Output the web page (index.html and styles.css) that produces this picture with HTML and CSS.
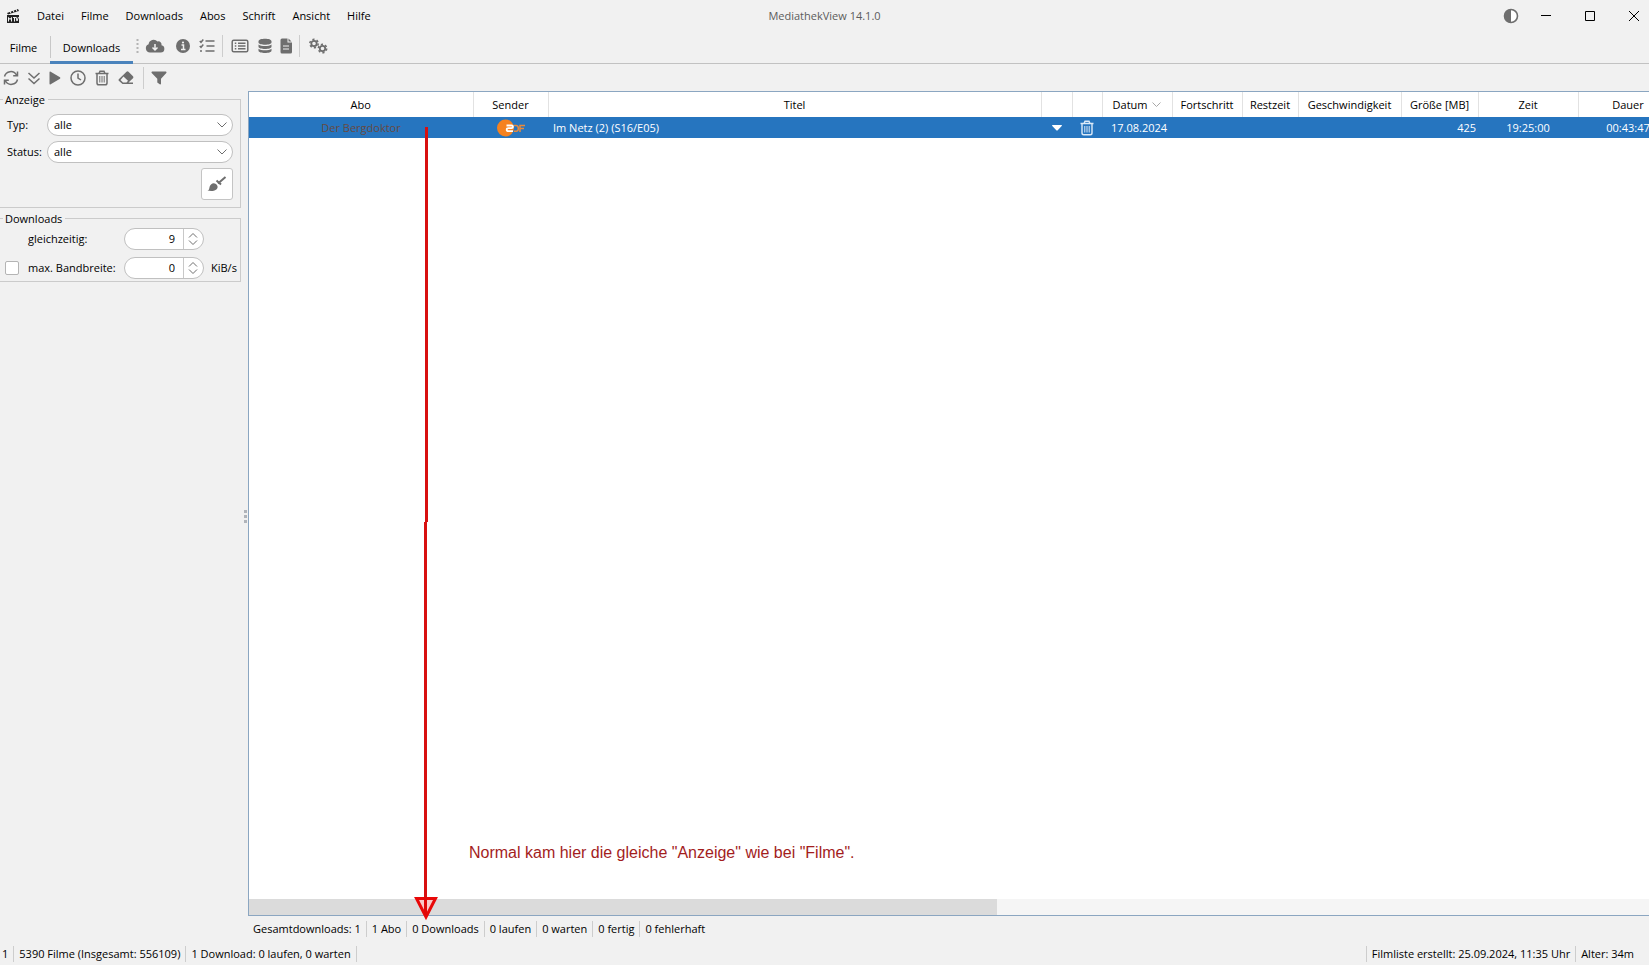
FILE: index.html
```html
<!DOCTYPE html>
<html lang="de">
<head>
<meta charset="utf-8">
<title>MediathekView 14.1.0</title>
<link rel="stylesheet" href="styles.css">
</head>
<body>
<div class="app">
  <header class="titlebar">
    <nav class="menu">
      <svg class="logo" width="14" height="16" viewBox="0 0 14 16" aria-hidden="true"><path d="M1 5 12 1l1 2L2 6.500z" fill="#222"/><path d="M1 7h12v8H1z" fill="#222"/><path d="m4 3 1 2.500M7 2l1 2.500M10 1l1 2.500" stroke="#f1f1f1" stroke-width="1"/><path d="M2.500 13.500v-4l1.500 2 1.500-2v4M7 9.500h3M8.500 9.500v4M10 9l1 4 1.500-4" fill="none" stroke="#f1f1f1"/></svg>
      <button>Datei</button><button>Filme</button><button>Downloads</button><button>Abos</button><button>Schrift</button><button>Ansicht</button><button>Hilfe</button>
    </nav>
    <h1 class="title">MediathekView 14.1.0</h1>
    <div class="window-controls">
      <button aria-label="Design wechseln"><svg width="16" height="16" viewBox="0 0 16 16"><circle cx="8" cy="8" r="6.500" fill="#fff" stroke="#6e6e6e" stroke-width="1.600"/><path d="M8 1.500a6.500 6.500 0 0 0 0 13z" fill="#6e6e6e"/></svg></button>
      <button aria-label="Minimieren"><svg width="10" height="10" viewBox="0 0 10 10"><path d="M0 4.500h10" stroke="#000"/></svg></button>
      <button aria-label="Maximieren"><svg width="10" height="10" viewBox="0 0 10 10"><path d="M.5.5h9v9h-9z" fill="none" stroke="#000"/></svg></button>
      <button aria-label="Schließen"><svg width="10" height="10" viewBox="0 0 10 10"><path d="m0 0 10 10M10 0 0 10" stroke="#000"/></svg></button>
    </div>
  </header>

  <div class="tabbar">
    <button class="tab">Filme</button>
    <button class="tab tab-active">Downloads</button>
    <div class="tools">
      <svg class="grip" width="3" height="14" viewBox="0 0 3 14" aria-hidden="true"><path d="M.5 0h2v2h-2zM.5 4h2v2h-2zM.5 8h2v2h-2zM.5 12h2v2h-2z" fill="#b4b4b4"/></svg>
      <button class="tool w-cloud" aria-label="Filmliste laden"><svg width="20" height="16" viewBox="0 0 20 16"><path d="M5 14.500A4.300 4.300 0 0 1 3.600 6.200 5 5 0 0 1 12.500 3.600a3 3 0 0 1 4 3.600A3.700 3.700 0 0 1 15.800 14.500z"/><path d="M10 6v6M7.500 9.500 10 12l2.500-2.500" class="cut"/></svg></button>
      <button class="tool" aria-label="Information"><svg width="16" height="16" viewBox="0 0 16 16"><circle cx="8" cy="8" r="7"/><path d="M6.500 7h2v4.500M6 11.500h4.500" class="cut"/><circle cx="8" cy="4.500" r="1.100" fill="#f1f1f1"/></svg></button>
      <button class="tool" aria-label="Aufgaben"><svg width="16" height="16" viewBox="0 0 16 16" class="line"><path d="M6.500 3h9M7.500 8h8M6.500 13h9M.8 3l1.200 1.300 2.300-2.800M.8 8l1.200 1.300 2.300-2.800"/><circle cx="2" cy="13" r="1" fill="#6e6e6e" stroke="none"/></svg></button>
      <span class="sep"></span>
      <button class="tool w-wide" aria-label="Liste"><svg width="18" height="16" viewBox="0 0 18 16" class="line"><rect x="1.200" y="2.200" width="15.600" height="11.600" rx="1.500"/><path d="M7 5.200h7.500M7 8h7.500M7 10.800h7.500M3.800 5.200h1.500M3.800 8h1.500M3.800 10.800h1.500"/></svg></button>
      <button class="tool w-db" aria-label="Datenbank"><svg width="14" height="16" viewBox="0 0 14 16"><path d="M.5 3.200C.5-.1 13.500-.1 13.500 3.200v1.300c0 3-13 3-13 0zM.5 6.600c2.800 2 10.200 2 13 0v2.200c0 3-13 3-13 0zM.5 10.800c2.800 2 10.200 2 13 0v2c0 3-13 3-13 0z"/></svg></button>
      <button class="tool w-narrow" aria-label="Protokoll"><svg width="12" height="16" viewBox="0 0 12 16"><path d="M2 .5h5.500v4H12V14a1.500 1.500 0 0 1-1.500 1.500H2A1.500 1.500 0 0 1 .5 14V2A1.500 1.500 0 0 1 2 .5z"/><path d="m8.500.5 3 3h-3z"/><path d="M3 8h6M3 11h6" class="cut thin"/></svg></button>
      <span class="sep"></span>
      <button class="tool w-gears" aria-label="Einstellungen"><svg width="20" height="16" viewBox="0 0 20 16" class="line"><circle cx="6" cy="5.500" r="2.700" stroke-width="1.800"/><circle cx="6" cy="5.500" r="4.200" stroke-width="1.500" stroke-dasharray="2.200 2.200"/><circle cx="14.500" cy="10.500" r="2.700" stroke-width="1.800"/><circle cx="14.500" cy="10.500" r="4.200" stroke-width="1.500" stroke-dasharray="2.200 2.200"/></svg></button>
    </div>
  </div>

  <div class="toolbar">
    <button class="tool w-refresh" aria-label="Aktualisieren"><svg width="16" height="16" viewBox="0 0 16 16" class="line"><path d="M1.500 6.500A6.500 6.500 0 0 1 13.500 5M14.500 1.500v4.300h-4.300M14.500 9.500A6.500 6.500 0 0 1 2.500 11M1.500 14.500v-4.300h4.300"/></svg></button>
    <button class="tool" aria-label="Alle starten"><svg width="14" height="16" viewBox="0 0 14 16" class="line"><path d="m1.500 3 5.500 5 5.500-5M1.500 8.500l5.500 5 5.500-5"/></svg></button>
    <button class="tool w-play" aria-label="Starten"><svg width="12" height="16" viewBox="0 0 12 16"><path d="M.5 2.500q0-1.300 1.200-.7l9.300 5.500q.8.700 0 1.400l-9.300 5.500q-1.200.6-1.200-.7z"/></svg></button>
    <button class="tool w-wide" aria-label="Zeitplan"><svg width="16" height="16" viewBox="0 0 16 16" class="line"><circle cx="8" cy="8" r="7"/><path d="M8 3.500V8l3 2"/></svg></button>
    <button class="tool w-narrow" aria-label="Löschen"><svg width="14" height="16" viewBox="0 0 14 16" class="line"><path d="M.5 3.500h13M4 3.500 5 1.200h4l1 2.300M2 3.500V13q0 1.800 1.800 1.800h6.400Q12 14.800 12 13V3.500"/><path d="M4.800 6v6.500M7 6v6.500M9.200 6v6.500" stroke-width="1"/></svg></button>
    <button class="tool w-wide" aria-label="Aufräumen"><svg width="16" height="16" viewBox="0 0 16 16"><path d="M.8 9.200 8.500 1.800q1-.9 2 0L15 6.300q.9 1 0 2L10.500 12.500H15V14H4.500L.8 10.800q-.7-.8 0-1.600z"/><path d="m5.500 6.500 4.500 4.300-1.500 1.600H5L2.500 10z" fill="#f1f1f1"/></svg></button>
    <span class="sep"></span>
    <button class="tool" aria-label="Filter"><svg width="16" height="16" viewBox="0 0 16 16"><path d="M1 1.500h14q1 .5.300 1.500L10 8.800v5q-.4 1-1.300.4L6.300 12.500V8.800L.7 3Q0 2 1 1.500z"/></svg></button>
  </div>

  <main class="main">
    <aside class="side">
      <fieldset class="group">
        <legend>Anzeige</legend>
        <div class="filters">
          <label for="typ">Typ:</label>
          <span class="combo"><select id="typ"><option>alle</option></select><svg width="10" height="6" viewBox="0 0 10 6"><path d="m.5.5 4.500 4.500L9.500.5"/></svg></span>
          <label for="status">Status:</label>
          <span class="combo"><select id="status"><option>alle</option></select><svg width="10" height="6" viewBox="0 0 10 6"><path d="m.5.5 4.500 4.500L9.500.5"/></svg></span>
          <button class="reset" aria-label="Filter zurücksetzen"><svg width="20" height="18" viewBox="0 0 20 18"><path d="M.5 15.500c2-.3 1.500-2 2.200-4C3.700 8.500 6.500 7.200 9 9c3 2.500 1.500 5.500-1.500 6.500-2.500.8-5 .5-7 0z"/><path d="m9.500 5.500 4.500 4" stroke="#6e6e6e" stroke-width="2"/><path d="M11 8.500 18.500 2" stroke="#6e6e6e" stroke-width="2"/></svg></button>
        </div>
      </fieldset>
      <fieldset class="group group-downloads">
        <legend>Downloads</legend>
        <div class="limits">
          <label class="limit-label" for="parallel">gleichzeitig:</label>
          <span class="spinner"><input id="parallel" type="number" value="9"><span class="steps"><button aria-label="Mehr"><svg width="10" height="6" viewBox="0 0 10 6"><path d="m1 5.500 4-4 4 4"/></svg></button><button aria-label="Weniger"><svg width="10" height="6" viewBox="0 0 10 6"><path d="m1 .5 4 4 4-4"/></svg></button></span></span>
          <input class="check" id="bandwidth-on" type="checkbox">
          <label class="limit-label" for="bandwidth-on">max. Bandbreite:</label>
          <span class="spinner"><input type="number" value="0" aria-label="max. Bandbreite in KiB/s"><span class="steps"><button aria-label="Mehr"><svg width="10" height="6" viewBox="0 0 10 6"><path d="m1 5.500 4-4 4 4"/></svg></button><button aria-label="Weniger"><svg width="10" height="6" viewBox="0 0 10 6"><path d="m1 .5 4 4 4-4"/></svg></button></span></span>
          <span class="unit">KiB/s</span>
        </div>
      </fieldset>
    </aside>
    <div class="splitter"><svg width="3" height="13" viewBox="0 0 3 13" aria-hidden="true"><path d="M0 0h3v3H0zM0 5h3v3H0zM0 10h3v3H0z" fill="#b0b4ba"/></svg></div>
    <section class="content">
      <div class="list">
        <div class="table-view">
          <table class="downloads">
            <colgroup><col class="c-abo"><col class="c-sender"><col class="c-titel"><col class="c-start"><col class="c-del"><col class="c-datum"><col class="c-fort"><col class="c-rest"><col class="c-speed"><col class="c-size"><col class="c-zeit"><col class="c-dauer"></colgroup>
            <thead><tr><th>Abo</th><th>Sender</th><th>Titel</th><th></th><th></th><th>Datum <svg class="sort" width="9" height="6" viewBox="0 0 9 6"><path d="m.5.5 4 4 4-4"/></svg></th><th>Fortschritt</th><th>Restzeit</th><th>Geschwindigkeit</th><th>Größe [MB]</th><th>Zeit</th><th>Dauer</th></tr></thead>
            <tbody><tr>
              <td class="abo">Der Bergdoktor</td>
              <td class="mid"><svg width="28" height="18" viewBox="0 0 28 18" role="img" aria-label="ZDF"><circle cx="8.500" cy="9" r="8.500" fill="#f58220"/><path d="M9.500 6.500h5q1.500 0 1.500 1.300T14.500 9.200h-3q-1.800 0-1.800 1.500t1.800 1.500H16" fill="none" stroke="#fff" stroke-width="1.800"/><path d="M17 6.500h2q2.300 0 2.300 2.900T19 12.200h-2M23 13V6.500h5M23 9.500h4" fill="none" stroke="#e88a3c" stroke-width="1.500"/></svg></td>
              <td>Im Netz (2) (S16/E05)</td>
              <td class="mid"><svg width="10" height="6" viewBox="0 0 10 6"><path d="M.5 0h9q.8.500.2 1L5.500 5.500h-1L.3 1Q-.3.500.5 0z" fill="#fff"/></svg></td>
              <td class="mid"><svg width="14" height="16" viewBox="0 0 14 16" fill="none" stroke="#dceaf8" stroke-width="1.400"><path d="M.5 3.500h13M4 3.500 5 1.200h4l1 2.300M2 3.500V13q0 1.800 1.800 1.800h6.400Q12 14.800 12 13V3.500"/><path d="M4.800 6v6.500M7 6v6.500M9.200 6v6.500" stroke-width="1"/></svg></td>
              <td class="date">17.08.2024</td><td></td><td></td><td></td>
              <td class="num">425</td><td class="mid">19:25:00</td><td class="mid">00:43:47</td>
            </tr></tbody>
          </table>
        </div>
        <div class="scroll"><div class="thumb"></div></div>
      </div>
      <div class="summary"><span>Gesamtdownloads: 1</span><span>1 Abo</span><span>0 Downloads</span><span>0 laufen</span><span>0 warten</span><span>0 fertig</span><span>0 fehlerhaft</span></div>
    </section>
  </main>

  <footer class="statusbar">
    <div class="status-left"><span>1</span><span>5390 Filme (Insgesamt: 556109)</span><span>1 Download: 0 laufen, 0 warten</span></div>
    <div class="status-right"><span>Filmliste erstellt: 25.09.2024, 11:35 Uhr</span><span>Alter: 34m</span></div>
  </footer>

  <svg class="arrow" width="24" height="794" viewBox="0 0 24 794" aria-hidden="true"><path d="M12.500 0v395M11.500 395v390" stroke="#d81010" stroke-width="3"/><path d="M2.500 771.500h19L12 790z" fill="#f8c8c8" stroke="#e80808" stroke-width="3"/><path d="M11.500 770v18" stroke="#e00808" stroke-width="3"/></svg>
  <p class="note">Normal kam hier die gleiche "Anzeige" wie bei "Filme".</p>
</div>
</body>
</html>
```
FILE: styles.css
```css
* { box-sizing: border-box; }
body { margin: 0; background: #f1f1f1; color: #000; font: 11px/16px "Open Sans", "Noto Sans", sans-serif; }
button, input, select { font: inherit; color: inherit; }
button { padding: 0; border: 0; background: none; }
svg { display: block; flex: none; }

.app { position: relative; display: flex; flex-direction: column; height: 100vh; overflow: hidden; }

.titlebar { display: grid; grid-template-columns: 1fr auto 1fr; align-items: center; height: 31px; }
.menu { display: flex; align-items: center; padding-left: 6px; gap: 17px; }
.title { margin: 0; font-size: 11px; font-weight: 400; color: #5c5c5c; }
.window-controls { display: flex; justify-content: flex-end; align-items: center; }
.window-controls button { display: grid; place-items: center; width: 44px; height: 30px; }
.window-controls button:first-child { width: 26px; }
.window-controls button:last-child { width: 37px; padding-left: 7px; }

.tabbar { display: flex; height: 33px; border-bottom: 1px solid #c2c2c2; }
.tab { width: 50px; height: 33px; padding: 3px 3px 2px 0; }
.tab-active { position: relative; width: 83px; padding: 3px 0 0; border-bottom: 3px solid #4a83bc; }
.tab-active::before { content: ""; position: absolute; left: 0; top: 5px; height: 22px; border-left: 1px solid #c8c8c8; }
.tools, .toolbar { display: flex; align-items: center; }
.tools { padding: 0 0 2px 3px; }
.tool { display: grid; place-items: center; width: 24px; height: 24px; fill: #6e6e6e; }
.w-wide { width: 28px; }
.w-cloud { width: 32px; }
.w-db { width: 22px; }
.w-narrow { width: 20px; }
.w-play { width: 18px; }
.w-refresh { width: 22px; }
.w-gears { width: 30px; }
.line { fill: none; stroke: #6e6e6e; stroke-width: 1.5; }
.cut { fill: none; stroke: #f1f1f1; stroke-width: 1.5; }
.thin { stroke-width: 1; }
.sep { width: 1px; height: 22px; margin: 0 3px; background: #cdcdcd; }
.toolbar { height: 27px; }

.main { display: flex; flex: 1; min-height: 0; }
.side { flex: 0 0 241px; }
.group { min-width: 0; margin: 0; padding: 6px 7px 7px 7px; border: 1px solid #cbcbcb; border-left: 0; }
.group legend { margin-left: -4px; padding: 0 3px 0 2px; height: 17px; line-height: 18px; }
.filters { display: grid; grid-template-columns: 40px 1fr; gap: 5px 0; align-items: center; }
.combo { position: relative; display: block; height: 22px; }
.combo select { display: block; appearance: none; width: 100%; height: 22px; padding: 0 24px 0 6px; border: 1px solid #c0c0c0; border-radius: 11px; background: #fff; }
.combo svg { position: absolute; right: 6px; top: 8px; pointer-events: none; fill: none; stroke: #6e6e6e; }
.reset { grid-column: 2; justify-self: end; display: grid; place-items: center; width: 32px; height: 32px; border: 1px solid #c4c4c4; border-radius: 3px; background: #fff; fill: #6e6e6e; }
.group-downloads { margin-top: 2px; padding: 1px 0 2px 5px; }
.group-downloads legend { margin-left: -2px; }
.limits { display: grid; grid-template-columns: 23px 96px 80px auto; gap: 7px 0; align-items: center; }
.limit-label { grid-column: 2; white-space: nowrap; }
.spinner { display: flex; height: 22px; border: 1px solid #c0c0c0; border-radius: 11px; background: #fff; overflow: hidden; }
.spinner input { flex: 1; min-width: 0; padding: 0 8px 0 0; border: 0; background: none; text-align: right; appearance: textfield; outline: 0; }
.spinner input::-webkit-inner-spin-button { appearance: none; }
.steps { display: flex; flex-direction: column; justify-content: center; gap: 2px; width: 20px; padding-left: 4px; border-left: 1px solid #c8c8c8; fill: none; stroke: #6e6e6e; }
.steps button { height: 6px; }
.check { grid-column: 1; appearance: none; width: 14px; height: 14px; margin: 0; border: 1px solid #b4b4b4; border-radius: 2px; background: #fff; }
.unit { padding-left: 7px; }

.splitter { display: flex; align-items: center; flex: 0 0 7px; padding: 0 1px 0 3px; }
.content { display: flex; flex-direction: column; flex: 1; min-width: 0; }
.list { display: flex; flex-direction: column; flex: 1; min-height: 0; border: 1px solid #8ba6c1; border-right: 0; background: #fff; }
.table-view { flex: 1; overflow: hidden; }
.downloads { table-layout: fixed; width: 1429px; border-collapse: collapse; }
.c-abo { width: 224px; } .c-sender { width: 75px; } .c-titel { width: 493px; }
.c-start { width: 31px; } .c-del { width: 30px; } .c-datum { width: 70px; }
.c-fort { width: 70px; } .c-rest { width: 56px; } .c-speed { width: 103px; }
.c-size { width: 77px; } .c-zeit { width: 100px; } .c-dauer { width: 100px; }
.downloads th { height: 25px; padding: 0; border-right: 1px solid #e2e2e2; font-weight: 400; text-align: center; white-space: nowrap; }
.sort { display: inline-block; margin-left: 2px; vertical-align: 1px; fill: none; stroke: #a8a8a8; }
.downloads td { height: 21px; padding: 0 5px; background: #2675bf; color: #fff; white-space: nowrap; }
.downloads .abo { color: #674a42; text-align: center; }
.downloads .mid { padding: 0; text-align: center; }
.downloads .mid svg { margin: 0 auto; }
.downloads .date { padding: 0 0 0 9px; }
.downloads .num { padding: 0 2px; text-align: right; }
.scroll { height: 16px; background: #f5f5f5; }
.thumb { width: 53.4%; height: 16px; background: #dbdbdb; }

.summary, .status-left, .status-right { display: flex; align-items: center; white-space: nowrap; }
.summary { height: 26px; }
.summary span { padding: 0 5px; }
.summary span + span { border-left: 1px solid #cdcdcd; }
.statusbar { display: flex; justify-content: space-between; align-items: center; height: 23px; }
.statusbar span { padding: 0 5px; }
.status-left span { border-right: 1px solid #cdcdcd; }
.status-left span:first-child { padding-left: 2px; }
.status-right { padding-right: 10px; }
.status-right span { border-left: 1px solid #cdcdcd; }

.arrow { position: absolute; left: 414px; top: 127px; pointer-events: none; }
.note { position: absolute; left: 469px; top: 843px; margin: 0; font: 16px/20px "Liberation Sans", Arial, sans-serif; color: #a31d1d; }
```
